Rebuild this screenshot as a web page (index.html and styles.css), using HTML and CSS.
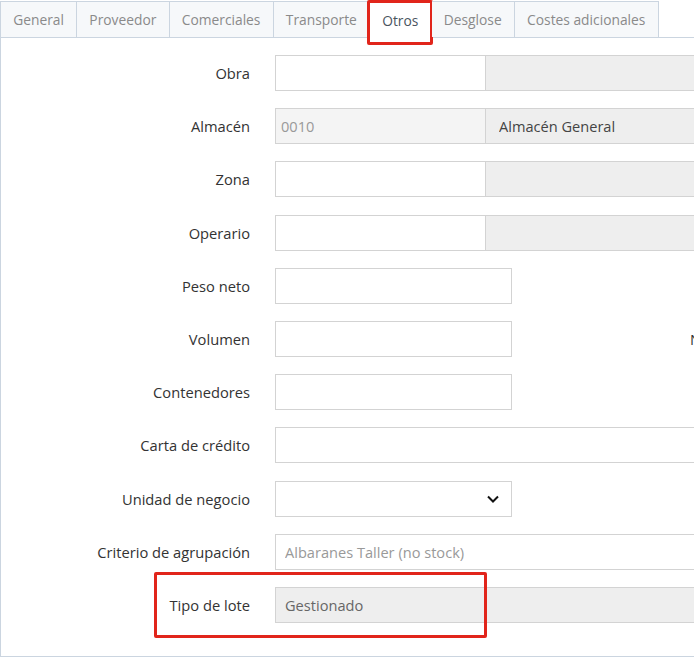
FILE: index.html
```html
<!DOCTYPE html>
<html lang="es">
<head>
  <meta charset="UTF-8">
  <meta name="viewport" content="width=device-width, initial-scale=1.0">
  <title>Otros</title>
  <link rel="stylesheet" href="styles.css">
</head>
<body>
  <nav class="tabs">
    <a class="tab">General</a>
    <a class="tab">Proveedor</a>
    <a class="tab">Comerciales</a>
    <a class="tab">Transporte</a>
    <a class="tab active">Otros <span class="mark mark-tab"></span></a>
    <a class="tab">Desglose</a>
    <a class="tab">Costes adicionales</a>
  </nav>

  <section class="panel">
    <div class="row">
      <label>Obra</label>
      <input type="text" class="code">
      <input type="text" class="desc" disabled>
    </div>
    <div class="row">
      <label>Almacén</label>
      <input type="text" class="code ro" value="0010" disabled>
      <input type="text" class="desc" value="Almacén General" disabled>
    </div>
    <div class="row">
      <label>Zona</label>
      <input type="text" class="code">
      <input type="text" class="desc" disabled>
    </div>
    <div class="row">
      <label>Operario</label>
      <input type="text" class="code">
      <input type="text" class="desc" disabled>
    </div>
    <div class="row">
      <label>Peso neto</label>
      <input type="text" class="mid">
    </div>
    <div class="row">
      <label>Volumen</label>
      <input type="text" class="mid">
      <label class="side">Nº de bultos</label>
    </div>
    <div class="row">
      <label>Contenedores</label>
      <input type="text" class="mid">
    </div>
    <div class="row">
      <label>Carta de crédito</label>
      <input type="text" class="wide">
    </div>
    <div class="row">
      <label>Unidad de negocio</label>
      <div class="select mid">
        <svg width="14" height="10" viewBox="0 0 14 10"><path d="M2 2.5 L7 7.5 L12 2.5" fill="none" stroke="#111" stroke-width="2"/></svg>
      </div>
    </div>
    <div class="row">
      <label>Criterio de agrupación</label>
      <input type="text" class="wide" placeholder="Albaranes Taller (no stock)">
    </div>
    <div class="row">
      <label>Tipo de lote</label>
      <input type="text" class="wide grey" value="Gestionado" disabled>
      <span class="mark mark-row"></span>
    </div>
  </section>
</body>
</html>
```

FILE: styles.css
```css
body {
  margin: 0;
  font-family: "Open Sans", Arial, sans-serif;
  font-size: 14px;
  color: #333;
  background: #fff;
  overflow: hidden;
  width: 694px;
  height: 658px;
}
.tabs {
  display: flex;
  height: 37px;
  border-bottom: 1px solid #cbd5e0;
  box-sizing: border-box;
  margin-top: 1px;
  font-size: 13.8px;
}
.tab {
  position: relative;
  display: flex;
  align-items: center;
  padding: 0 12.2px;
  background: #f6f8fa;
  color: #8a8a8a;
  border: 1px solid #cbd5e0;
  border-left: none;
  border-bottom: none;
  cursor: pointer;
}
.tab:first-child {
  border-left: 1px solid #cbd5e0;
}
.tab.active {
  background: #fff;
  color: #4a5460;
  height: 37px;
}
.mark {
  position: absolute;
  border: 3px solid #e1251b;
  border-radius: 2px;
  pointer-events: none;
}
.mark-tab {
  left: -3px;
  right: -2px;
  top: -2px;
  bottom: -6px;
}
.panel {
  border-left: 1px solid #cbd5e0;
  border-bottom: 1px solid #cbd5e0;
  height: 619px;
  box-sizing: border-box;
  padding-top: 17px;
  display: flex;
  flex-direction: column;
  gap: 17.2px;
}
.row {
  position: relative;
  display: flex;
  align-items: center;
  height: 36px;
}
.row label {
  width: 249px;
  flex: none;
  text-align: right;
  padding-right: 25px;
  color: #333;
  font-size: 14.7px;
}
.row label.side {
  width: auto;
  text-align: left;
  margin-left: 178px;
  padding: 0;
}
input {
  font: inherit;
  font-size: 14.6px;
  height: 36px;
  box-sizing: border-box;
  border: 1px solid #d3d3d3;
  background: #fff;
  padding: 0 9px;
  color: #555;
  flex: none;
  margin: 0;
}
input::placeholder {
  color: #999;
}
.code {
  width: 211px;
}
.code.ro {
  background: #f4f4f4;
  color: #999;
  padding-left: 5px;
}
.desc {
  width: 260px;
  background: #eee;
  border-left: 1px solid #d3d3d3;
  margin-left: -1px;
  padding-left: 13px;
  color: #444;
}
.mid {
  width: 237px;
}
.wide {
  width: 480px;
}
.grey {
  background: #eee;
  color: #666;
}
.select {
  height: 36px;
  box-sizing: border-box;
  border: 1px solid #d3d3d3;
  display: flex;
  align-items: center;
  justify-content: flex-end;
  padding-right: 11px;
}
.mark-row {
  left: 153px;
  width: 327px;
  top: -15px;
  height: 60px;
}
```
